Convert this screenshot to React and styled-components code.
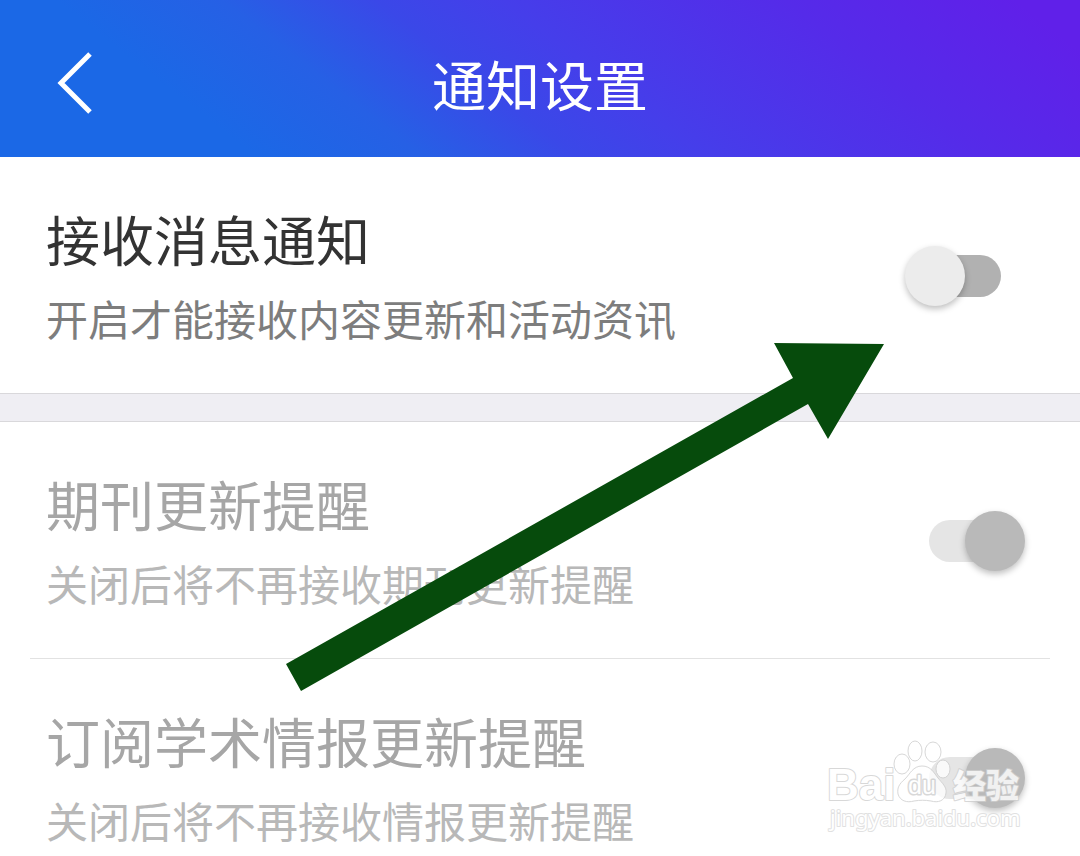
import React, { useState } from "react";
import styled, { createGlobalStyle } from "styled-components";

const COLORS = {
  text: "#333333",
  textSecondary: "#7d7d7d",
  textDisabled: "#a6a6a6",
  textDisabledSecondary: "#b8b8b8",
  band: "#efeef3",
  bandBorder: "#d9d8db",
  divider: "#e2e2e2",
  arrow: "#064b0c",
};

const GlobalStyle = createGlobalStyle`
  *, *::before, *::after {
    box-sizing: border-box;
  }

  body {
    margin: 0;
    background-color: white;
    font-family: "Noto Sans CJK SC", "Liberation Sans", sans-serif;
  }
`;

const Page = styled.div`
  position: relative;
  height: 100vh;
  overflow: hidden;
`;

const Header = styled.header`
  display: grid;
  grid-template-columns: 1fr auto 1fr;
  align-items: center;
  padding: 10px 48px 0;
  height: 157px;
  color: white;
  background: linear-gradient(
    38deg,
    #1b68e6 20%,
    #2660e5 33%,
    #3a48e8 45%,
    #453eea 55%,
    #552be9 77%,
    #6020e9 95%
  );
`;

const HeaderTitle = styled.h1`
  margin: 0;
  font-size: 54px;
  font-weight: 400;
  line-height: 80px;
`;

const BackButton = styled.button`
  display: flex;
  justify-self: start;
  padding: 0;
  border: none;
  color: inherit;
  background: none;
`;

const Section = styled.section`
  padding: 0 30px;
`;

const Band = styled.div`
  height: 29px;
  background-color: ${COLORS.band};
  border-top: 1px solid ${COLORS.bandBorder};
  border-bottom: 1px solid ${COLORS.bandBorder};
`;

const Row = styled.div`
  display: flex;
  align-items: center;
  justify-content: space-between;
  height: 236px;
  padding: 0 49px 0 16px;

  & + & {
    border-top: 1px solid ${COLORS.divider};
  }
`;

const RowLabel = styled.label`
  display: flex;
  flex-direction: column;
  padding-top: 6px;
`;

const RowTitle = styled.span`
  font-size: 54px;
  line-height: 80px;
  color: ${({ $disabled }) => ($disabled ? COLORS.textDisabled : COLORS.text)};
`;

const RowHint = styled.span`
  font-size: 42px;
  line-height: 78px;
  color: ${({ $disabled }) =>
    $disabled ? COLORS.textDisabledSecondary : COLORS.textSecondary};
`;

const Switch = styled.input`
  appearance: none;
  flex: none;
  width: 72px;
  height: 42px;
  margin: 2px 0 0;
  border-radius: 21px;
  background-color: #b1b1b1;

  &::before {
    content: "";
    display: block;
    width: 60px;
    height: 60px;
    margin: -9px 0 0 -24px;
    border-radius: 50%;
    background-color: #ececec;
    box-shadow: 0 3px 6px rgba(0, 0, 0, 0.25);
  }

  &:checked {
    background-color: #e5e5e5;
  }

  &:checked::before {
    margin-left: 36px;
    background-color: #b9b9b9;
  }
`;

const Arrow = styled.svg`
  position: absolute;
  top: 342px;
  left: 286px;
  pointer-events: none;
`;

const Watermark = styled.svg`
  position: absolute;
  right: 50px;
  bottom: 16px;
  opacity: 0.8;
  pointer-events: none;

  text {
    paint-order: stroke;
  }
`;

const SettingRow = ({ id, title, hint, disabled, defaultChecked }) => {
  const [checked, setChecked] = useState(Boolean(defaultChecked));
  return (
    <Row>
      <RowLabel htmlFor={id}>
        <RowTitle $disabled={disabled}>{title}</RowTitle>
        <RowHint $disabled={disabled}>{hint}</RowHint>
      </RowLabel>
      <Switch
        id={id}
        type="checkbox"
        role="switch"
        checked={checked}
        disabled={disabled}
        onChange={(event) => setChecked(event.target.checked)}
      />
    </Row>
  );
};

const BaiduWatermark = () => (
  <Watermark width="204" height="104" viewBox="0 0 204 104" aria-hidden="true">
    <g
      fill="white"
      stroke="#cfcfcf"
      strokeLinejoin="round"
      fontFamily='"Liberation Sans", sans-serif'
    >
      <text x="1" y="64" fontSize="44" fontWeight="700" strokeWidth="2">
        Bai
      </text>
      <ellipse cx="76" cy="28" rx="8" ry="10" />
      <ellipse cx="89" cy="15" rx="7" ry="10" />
      <ellipse cx="107" cy="16" rx="8" ry="10" />
      <path d="M96 30 C87 30 84 38 79 43 C73 48 71 52 72 58 C74 65 81 67 88 65 C94 64 99 64 105 65 C112 67 119 65 120 57 C121 51 116 47 112 42 C108 37 105 30 96 30 Z" />
      <ellipse cx="117" cy="33" rx="7" ry="9" />
      <text x="82" y="58" fontSize="25" strokeWidth="3">
        du
      </text>
      <text
        x="127"
        y="62"
        fontSize="33"
        fontWeight="900"
        strokeWidth="2"
        fontFamily='"Noto Sans CJK SC", sans-serif'
      >
        经验
      </text>
      <text
        x="4"
        y="90"
        fontSize="22"
        strokeWidth="2"
        stroke="#dadada"
        fontFamily='"Noto Sans", sans-serif'
      >
        jingyan.baidu.com
      </text>
    </g>
  </Watermark>
);

const App = () => (
  <>
    <GlobalStyle />
    <Page>
      <Header>
        <BackButton type="button" aria-label="返回">
          <svg width="56" height="68" viewBox="0 0 56 68" fill="none">
            <path d="M42 4 L13 33 L42 62" stroke="currentColor" strokeWidth="5" />
          </svg>
        </BackButton>
        <HeaderTitle>通知设置</HeaderTitle>
      </Header>
      <Section>
        <SettingRow
          id="messages"
          title="接收消息通知"
          hint="开启才能接收内容更新和活动资讯"
        />
      </Section>
      <Band />
      <Section>
        <SettingRow
          id="journals"
          title="期刊更新提醒"
          hint="关闭后将不再接收期刊更新提醒"
          disabled
          defaultChecked
        />
        <SettingRow
          id="reports"
          title="订阅学术情报更新提醒"
          hint="关闭后将不再接收情报更新提醒"
          disabled
          defaultChecked
        />
      </Section>
      <Arrow width="598" height="350" viewBox="0 0 598 350" aria-hidden="true">
        <path
          d="M598 2 L488 1 L507 36 L0 322 L15 349 L522 62 L542 97 Z"
          fill={COLORS.arrow}
        />
      </Arrow>
      <BaiduWatermark />
    </Page>
  </>
);

export default App;
